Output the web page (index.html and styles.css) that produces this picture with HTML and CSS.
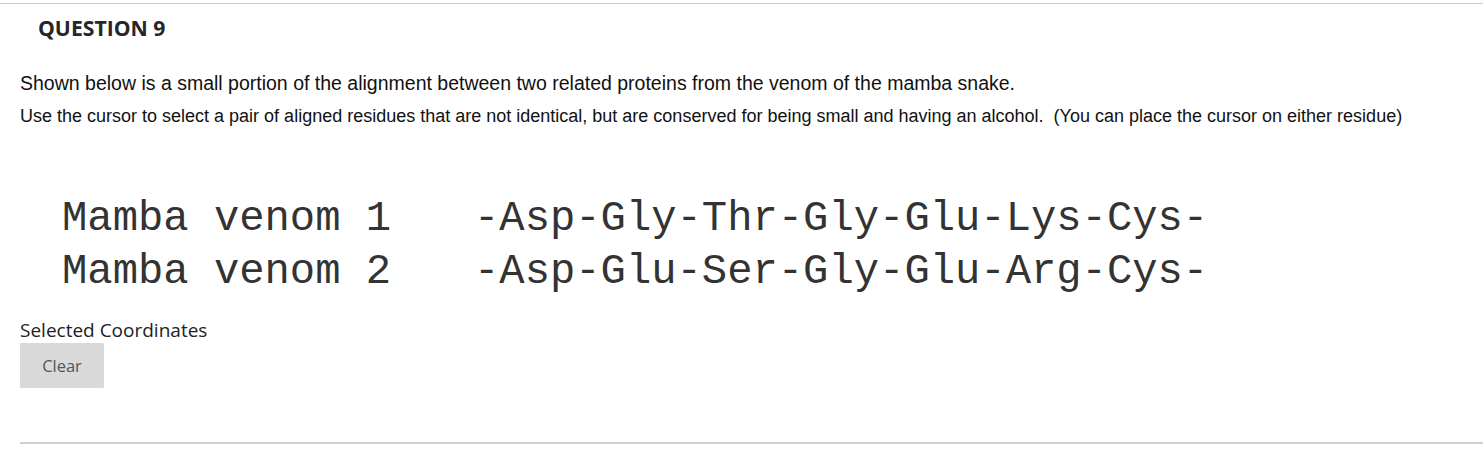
FILE: index.html
```html
<!DOCTYPE html>
<html>
<head>
<meta charset="utf-8">
<link rel="stylesheet" href="styles.css">
</head>
<body>
<div class="question">
  <h2 class="q-title">QUESTION 9</h2>
  <div class="q-body">
    <p class="lead">Shown below is a small portion of the alignment between two related proteins from the venom of the mamba snake.</p>
    <p class="instr">Use the cursor to select a pair of aligned residues that are not identical, but are conserved for being small and having an alcohol.&nbsp; (You can place the cursor on either residue)</p>
    <div class="alignment">
      <div class="row"><span class="label">Mamba venom 1</span><span class="seq">-Asp-Gly-Thr-Gly-Glu-Lys-Cys-</span></div>
      <div class="row"><span class="label">Mamba venom 2</span><span class="seq">-Asp-Glu-Ser-Gly-Glu-Arg-Cys-</span></div>
    </div>
    <div class="coords">Selected Coordinates</div>
    <button class="clear">Clear</button>
    <div class="divider"></div>
  </div>
</div>
</body>
</html>
```
FILE: styles.css
```css
html, body {
  margin: 0;
  padding: 0;
  background: #fff;
}
.question {
  margin-top: 3px;
  border-top: 1px solid #c8c8c8;
}
.q-title {
  margin: 0;
  padding: 11px 0 0 38px;
  font-family: "Open Sans", sans-serif;
  font-weight: 700;
  font-size: 21.2px;
  line-height: 25px;
  color: #262626;
}
.q-body {
  padding-left: 20px;
}
.lead {
  margin: 32px 0 0 0;
  font-family: "Liberation Sans", Arial, sans-serif;
  font-size: 19.5px;
  line-height: 23px;
  color: #111;
}
.instr {
  margin: 11px 0 0 0;
  font-family: "Liberation Sans", Arial, sans-serif;
  font-size: 18px;
  line-height: 21px;
  color: #111;
}
.alignment {
  margin: 66px 0 0 42px;
  font-family: "Courier New", "Nimbus Mono PS", "FreeMono", "Liberation Mono", monospace;
  font-size: 42.2px;
  line-height: 53px;
  color: #333;
}
.row {
  display: flex;
  white-space: pre;
}
.label {
  width: 412px;
}
.coords {
  margin-top: 19px;
  font-family: "Open Sans", sans-serif;
  font-size: 19px;
  line-height: 24px;
  color: #222;
}
.clear {
  display: block;
  margin-top: 1px;
  width: 84px;
  height: 45px;
  border: none;
  border-radius: 1px;
  background: #d9d9d9;
  font-family: "Open Sans", sans-serif;
  font-size: 16.5px;
  color: #555;
  padding: 0;
}
.divider {
  margin-top: 54px;
  border-top: 2px solid #d0d0d0;
}
```
